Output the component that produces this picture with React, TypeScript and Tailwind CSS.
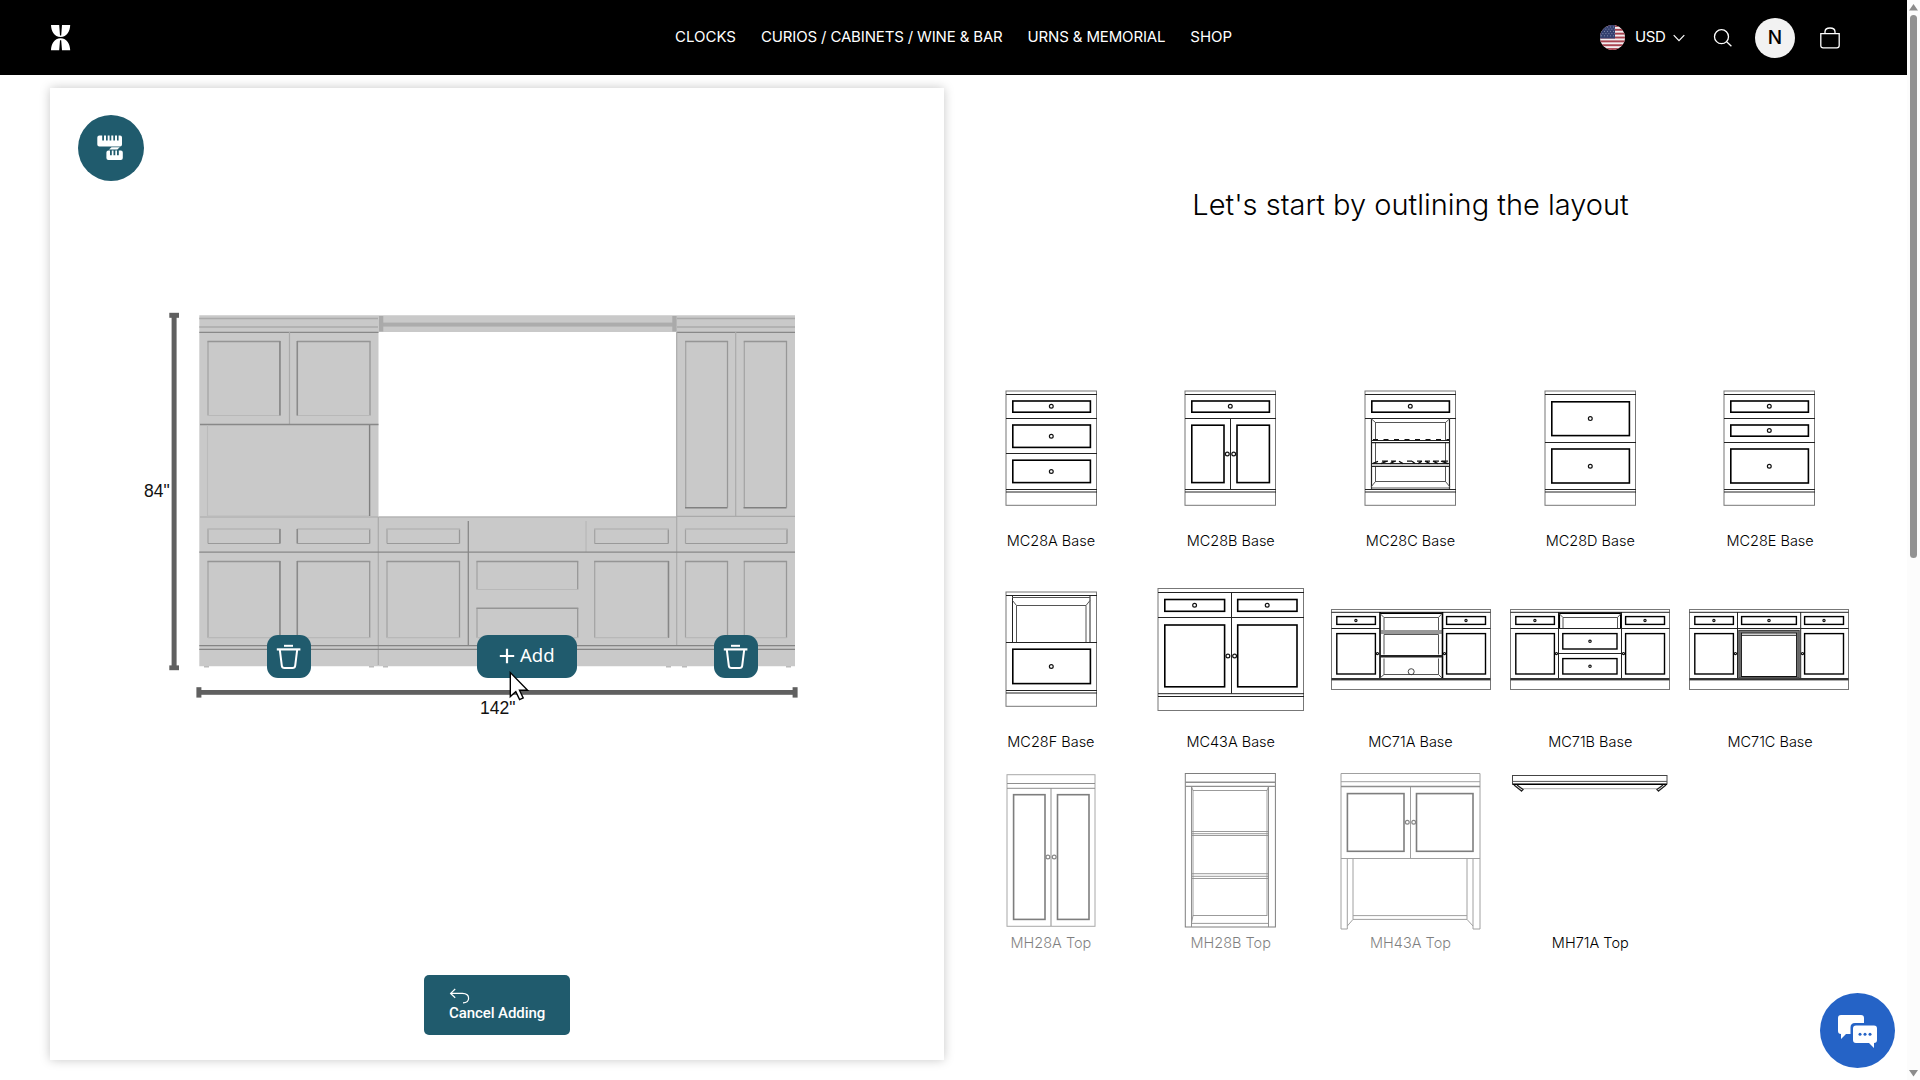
import type { ReactNode } from "react";

type BoxProps = { x1: number; y1: number; x2: number; y2: number; w?: number; c?: string; fill?: string };

/** Outlined rectangle given by its two corners. */
function Box({ x1, y1, x2, y2, w = 1, c = "#000", fill = "none" }: BoxProps) {
  return <rect x={x1} y={y1} width={x2 - x1} height={y2 - y1} fill={fill} stroke={c} strokeWidth={w} />;
}

function Lines({ d, w = 1, c = "#222" }: { d: string; w?: number; c?: string }) {
  return <path d={d} fill="none" stroke={c} strokeWidth={w} />;
}

function Knob({ x, y, r = 1.9, w = 1.2 }: { x: number; y: number; r?: number; w?: number }) {
  return <circle cx={x} cy={y} r={r} fill="#fff" stroke="#111" strokeWidth={w} />;
}

/* ---------- cabinet line drawings, 180 x 160 each ---------- */

function Frame28({ children }: { children: ReactNode }) {
  return (
    <>
      <Box x1={45} y1={22} x2={135.5} y2={136.3} c="#777" />
      <Lines d="M45 25.5H136M45 120.5H136M45 123H136" w={1.1} />
      {children}
    </>
  );
}

function TopDrawer28() {
  return (
    <>
      <Lines d="M45 49.5H136" />
      <Box x1={51.8} y1={32} x2={129.4} y2={43.2} w={1.6} />
      <Knob x={90.3} y={37.3} />
    </>
  );
}

function MC28A() {
  return (
    <Frame28>
      <TopDrawer28 />
      <Lines d="M45 84.5H136" />
      <Box x1={51.8} y1={56} x2={129.4} y2={78.4} w={1.6} />
      <Box x1={51.8} y1={91.2} x2={129.4} y2={113.6} w={1.6} />
      <Knob x={90.3} y={67.2} />
      <Knob x={90.3} y={102.5} />
    </Frame28>
  );
}

function MC28B() {
  return (
    <Frame28>
      <TopDrawer28 />
      <Lines d="M90.5 49V120" />
      <Box x1={51.8} y1={56.2} x2={84} y2={113.6} w={1.6} />
      <Box x1={97} y1={56.2} x2={129.4} y2={113.6} w={1.6} />
      <Knob x={87.3} y={85} />
      <Knob x={93.7} y={85} />
    </Frame28>
  );
}

function MC28C() {
  return (
    <Frame28>
      <TopDrawer28 />
      <Lines d="M51.5 49.5V120M129.5 49.5V120" w={1.2} />
      <Box x1={55.5} y1={53.5} x2={125.5} y2={112.5} c="#555" />
      <Lines d="M51 49.5L55.5 53.5M130 49.5L125.5 53.5M51 118L55.5 112.5M130 118L125.5 112.5M51 119H130" c="#555" />
      <rect x={52} y={71.5} width={77} height={2} fill="#fff" />
      <rect x={52} y={94.5} width={77} height={3} fill="#fff" />
      <Lines d="M52 71.5H129M52 73.7H129M52 97.3H129M52 94.7H129" w={1.2} />
      <path d="M53 70.6H129" stroke="#111" strokeWidth={1.2} strokeDasharray="5 5.5" />
      <path d="M53 94.4L58 92.4M61 94.6L67 92.2M70 94.6L75 92.2M79 92.2L83 94.6M87 92.2H92M92 92.2L95 94.6M98 94.6L102 92.2M105 92.2L110 94.6M113 92.2L118 94.6M121 92.2L128 94.6M62 92.2H68M71 92.2H76M97 92.2H102M105 92.2H110M113 92.2H119M122 92.2H128" stroke="#111" strokeWidth={1.3} />
    </Frame28>
  );
}

function MC28D() {
  return (
    <Frame28>
      <Lines d="M45 73.5H136" />
      <Box x1={51.8} y1={32.8} x2={129.4} y2={66.6} w={1.6} />
      <Box x1={51.8} y1={80} x2={129.4} y2={114} w={1.6} />
      <Knob x={90.3} y={49.6} />
      <Knob x={90.3} y={97.2} />
    </Frame28>
  );
}

function MC28E() {
  return (
    <Frame28>
      <TopDrawer28 />
      <Lines d="M45 73.5H136" />
      <Box x1={51.8} y1={56} x2={129.4} y2={67.2} w={1.6} />
      <Box x1={51.8} y1={80} x2={129.4} y2={114} w={1.6} />
      <Knob x={90.3} y={61.5} />
      <Knob x={90.3} y={97.2} />
    </Frame28>
  );
}

function MC28F() {
  return (
    <Frame28>
      <Lines d="M45 72.5H136M51.5 25.5V72M129 25.5V72" />
      <Lines d="M51 27.5H129M55.5 72V35.5H125V72M51.5 30.5L55.5 35.5M129 30.5L125 35.5" c="#555" />
      <Box x1={51.8} y1={79.2} x2={129.4} y2={113.6} w={1.6} />
      <Knob x={90.3} y={96.5} />
    </Frame28>
  );
}

function MC43A() {
  return (
    <>
      <Box x1={17} y1={18.5} x2={162.5} y2={140.5} c="#777" />
      <Lines d="M17 22.5H163M17 47.5H163M17 123.7H163M17 126.5H163M90.5 22V123.5" />
      <Box x1={23.8} y1={29.5} x2={83.6} y2={41.3} w={1.6} />
      <Box x1={96.7} y1={29.5} x2={156} y2={41.3} w={1.6} />
      <Box x1={23.8} y1={55} x2={83.6} y2={116.8} w={1.6} />
      <Box x1={96.7} y1={55} x2={156} y2={116.8} w={1.6} />
      <Knob x={53.6} y={35.2} />
      <Knob x={126.2} y={35.2} />
      <Knob x={86.9} y={86} />
      <Knob x={93.6} y={86} />
    </>
  );
}

function Frame71({ children }: { children: ReactNode }) {
  return (
    <>
      <Box x1={10.5} y1={39.5} x2={169.5} y2={119.5} c="#777" />
      <Lines d="M10.5 42.3H169.5" />
      <rect x={10.5} y={108} width={159} height={2.4} fill="#333" />
      <Lines d="M10.5 58.5H58.5M121.5 58.5H169.5" />
      <Box x1={15.8} y1={46.6} x2={54.4} y2={54.4} w={1.4} />
      <Box x1={125.6} y1={46.6} x2={164.5} y2={54.4} w={1.4} />
      <Box x1={15.8} y1={63.6} x2={54.4} y2={104} w={1.4} />
      <Box x1={125.6} y1={63.6} x2={164.5} y2={104} w={1.4} />
      <Knob x={34.9} y={50.5} r={1.1} />
      <Knob x={145} y={50.5} r={1.1} />
      {children}
      <Knob x={56.4} y={83.6} r={1.1} />
      <Knob x={123.5} y={83.6} r={1.1} />
    </>
  );
}

function MC71A() {
  return (
    <Frame71>
      <Lines d="M59 42V108M121.5 42V108" w={1.6} c="#000" />
      <Lines d="M59 43.2H121.5" w={1.4} c="#000" />
      <Lines d="M63 60V47.5H117.5V60M63 84.5V64.5H117.5V84.5M63 88.5V104.5H117.5V88.5M59 43.5L63 47.5M121 43.5L117.5 47.5M59 108L63 104.5M121 108L117.5 104.5" c="#555" />
      <Lines d="M59 61H121.5M59 63H121.5" c="#333" />
      <Lines d="M59 86.3H121.5" w={2.6} />
      <circle cx={90.2} cy={101.7} r={3} fill="none" stroke="#333" strokeWidth={0.9} />
    </Frame71>
  );
}

function MC71B() {
  return (
    <Frame71>
      <Lines d="M58.5 42V108M121.5 42V108M58.5 58.5H121.5M58.5 83.5H121.5" />
      <Lines d="M59.3 58V43.2H120.8V58" w={1.6} c="#000" />
      <Lines d="M63 58V47.5H117.5V58M59 43.5L63 47.5M121 43.5L117.5 47.5" c="#555" />
      <Box x1={62.8} y1={63.6} x2={117} y2={79} w={1.4} />
      <Box x1={62.8} y1={88.6} x2={117} y2={104} w={1.4} />
      <Knob x={90} y={71.3} r={1.2} />
      <Knob x={90} y={96.3} r={1.2} />
    </Frame71>
  );
}

function MC71C() {
  return (
    <Frame71>
      <Lines d="M58.5 42V108M121.7 42V108M58.5 58.5H121.5" />
      <Box x1={62.6} y1={46.6} x2={117.4} y2={54.4} w={1.4} />
      <Knob x={90} y={50.5} r={1.2} />
      <Box x1={61} y1={61.5} x2={119} y2={107.3} w={2.6} c="#777" />
      <Box x1={62.4} y1={63} x2={117.6} y2={106.5} w={1} c="#111" />
      <Lines d="M62.6 65.3H117.4" />
      <Box x1={59.8} y1={60.3} x2={120.2} y2={108} w={0.8} c="#222" />
    </Frame71>
  );
}

function MH28A() {
  return (
    <>
      <Box x1={46} y1={3.7} x2={134} y2={155.3} c="#555" />
      <Lines d="M46 12.5H134M46 17.3H134M90 17V155" />
      <Box x1={52.6} y1={23.7} x2={84} y2={148.4} w={1.6} />
      <Box x1={96.5} y1={23.7} x2={128} y2={148.4} w={1.6} />
      <Knob x={86.9} y={86} />
      <Knob x={93.2} y={86} />
    </>
  );
}

function MH28B() {
  return (
    <>
      <Box x1={44.3} y1={2.5} x2={134.4} y2={156} />
      <Lines d="M44 11.3H134M44 15.4H134" w={1.4} />
      <Lines d="M50.5 15.4V156M127.5 15.4V156" w={1} />
      <Lines d="M52 19V145M126 19V145" w={1} c="#444" />
      <Lines d="M52 19.5H126M50.5 15.5L52 19.5M127.5 15.5L126 19.5M50.5 60.5H127.5M50.5 62.7H127.5M50.5 64.5H127.5M50.5 102.7H127.5M50.5 105.3H127.5M50.5 107.5H127.5M52 144.5H126M50.5 152.4H127.5M52 144.5L50.5 152" w={0.9} />
    </>
  );
}

function MH43A() {
  return (
    <>
      <Lines d="M19 2.5H158V158H151V87.5M19 2.5V158H25.3V87.5" c="#444" />
      <Lines d="M19 10.7H158M19 87.5H158M88.5 15.5V87.5" c="#444" />
      <Lines d="M19 15.5H158" w={1.3} />
      <Box x1={25.4} y1={22.6} x2={82} y2={80.3} w={1.6} />
      <Box x1={94.5} y1={22.6} x2={151} y2={80.3} w={1.6} />
      <Lines d="M31 87.5V148.5M145 87.5V148.5M31 144.6H145M31 148.4H145M31 148.4L25.3 155M145 148.4L151 155" c="#444" />
      <Knob x={85.3} y={51.3} />
      <Knob x={91.7} y={51.3} />
    </>
  );
}

function MH71A() {
  return (
    <>
      <Box x1={12.5} y1={4.5} x2={167} y2={13} c="#444" />
      <Lines d="M12.5 10.4H167" c="#555" />
      <Lines d="M12.5 13.3H167" w={1.3} c="#000" />
      <Lines d="M22 17.7H158" w={0.8} c="#999" />
      <Lines d="M14 14L21.5 20M17 14L23 18.5L21 20.5M166 14L158.5 20M163 14L157 18.5L159 20.5" w={1.3} />
    </>
  );
}

const pieces: { name: string; art: () => ReactNode; dim?: boolean; dx?: number }[] = [
  { name: "MC28A Base", art: MC28A },
  { name: "MC28B Base", art: MC28B, dx: -1 },
  { name: "MC28C Base", art: MC28C, dx: -1 },
  { name: "MC28D Base", art: MC28D },
  { name: "MC28E Base", art: MC28E, dx: -1 },
  { name: "MC28F Base", art: MC28F },
  { name: "MC43A Base", art: MC43A },
  { name: "MC71A Base", art: MC71A },
  { name: "MC71B Base", art: MC71B },
  { name: "MC71C Base", art: MC71C, dx: -1 },
  { name: "MH28A Top", art: MH28A, dim: true },
  { name: "MH28B Top", art: MH28B, dim: true },
  { name: "MH43A Top", art: MH43A, dim: true, dx: 1 },
  { name: "MH71A Top", art: MH71A },
];

/* ---------- header ---------- */

function Logo() {
  return (
    <svg width="20" height="26" viewBox="0 0 20 26" fill="#fff">
      <path d="M0 0H8.2L9 10.4H10.2L11 0H19.2C19 6 16 12 9.6 12C3.2 12 .2 6 0 0Z" />
      <path d="M0 25.2H8.2L9 15.2H10.2L11 25.2H19.2C19 19.2 16 13.2 9.6 13.2C3.2 13.2 .2 19.2 0 25.2Z" />
    </svg>
  );
}

function Flag() {
  return (
    <svg width="25" height="25" viewBox="0 0 25 25">
      <clipPath id="flag-round">
        <circle cx="12.5" cy="12.5" r="12.5" />
      </clipPath>
      <g clipPath="url(#flag-round)">
        <rect width="25" height="25" fill="#f3eef0" />
        {[0, 1, 2, 3, 4, 5, 6].map((i) => (
          <rect key={i} y={i * 3.85} width="25" height="1.92" fill="#a8434f" />
        ))}
        <rect width="15" height="13.5" fill="#34406f" />
        <path
          d="M1 2H15M2.5 4.2H15M1 6.4H15M2.5 8.6H15M1 10.8H15"
          stroke="#a9b0cc"
          strokeWidth="0.8"
          strokeDasharray="0.8 2.2"
        />
      </g>
    </svg>
  );
}

function Header() {
  return (
    <header className="flex h-[75px] items-center bg-black pl-[51px] pr-[66px] text-[15px] text-white">
      <div className="w-[624px]">
        <Logo />
      </div>
      <nav className="flex flex-1 gap-[25px] whitespace-nowrap">
        <a>CLOCKS</a>
        <a className="tracking-[-0.15px]">CURIOS / CABINETS / WINE &amp; BAR</a>
        <a className="tracking-[-0.15px]">URNS &amp; MEMORIAL</a>
        <a>SHOP</a>
      </nav>
      <div className="flex items-center">
        <Flag />
        <span className="ml-[10px] w-[31px] tracking-[-0.4px]">USD</span>
        <svg className="ml-[7px]" width="12" height="8" viewBox="0 0 12 8" fill="none" stroke="#fff" strokeWidth="1.2">
          <path d="M.7 1.2L6 6.6L11.3 1.2" />
        </svg>
        <svg className="ml-[28px]" width="20" height="20" viewBox="0 0 20 20" fill="none" stroke="#fff" strokeWidth="1.3">
          <circle cx="8.5" cy="8.7" r="7" />
          <path d="M13.4 13.6L18.4 18.2" />
        </svg>
        <div className="ml-[22px] mt-[1px] flex size-10 items-center justify-center rounded-full bg-[#f2f2f2] pt-[1px] text-[19px] font-medium text-black">
          N
        </div>
        <svg className="ml-[25px] mt-[1px]" width="21" height="22" viewBox="0 0 21 22" fill="none" stroke="#fff" strokeWidth="1.3">
          <path d="M.8 6.6H19.2V18.4Q19.2 20.8 16.8 20.8H3.2Q.8 20.8 .8 18.4ZM5 6.4V4.6Q5.2 1 10 1Q14.8 1 15 4.6V6.4" />
        </svg>
      </div>
    </header>
  );
}

/* ---------- planner ---------- */

const inset = (x1: number, y1: number, x2: number, y2: number) => ({ x1, y1, x2, y2 });

const wallPanels = [
  inset(208, 341.5, 279.8, 415.5),
  inset(297.5, 341.5, 370, 415.5),
  inset(685.7, 341.5, 727.5, 507.5),
  inset(744.3, 341.5, 786.5, 507.5),
  inset(208, 529, 279.8, 543.5),
  inset(297.5, 529, 369.7, 543.5),
  inset(387, 529, 459.5, 543.5),
  inset(594.7, 529, 668.3, 543.5),
  inset(685.5, 529, 787, 543.5),
  inset(208, 561.5, 279.8, 637.7),
  inset(297.5, 561.5, 369.7, 637.7),
  inset(387, 561.5, 459.5, 637.7),
  inset(477, 561.5, 577.7, 589.5),
  inset(477, 608.3, 577.7, 637.7),
  inset(594.7, 561.5, 668.3, 637.7),
  inset(685.5, 561.5, 727.5, 637.7),
  inset(744.3, 561.5, 786.5, 637.7),
];

function Wall() {
  return (
    <svg width="894" height="660" viewBox="50 180 894 660">
      <path d="M199.3 315.3H795V666.3H199.3Z" fill="#c9c9c9" />
      <path d="M378.5 332H676.5V516.5H378.5Z" fill="#fff" />
      {/* cornices */}
      <path d="M199.3 318.5H378M199.3 327H378M677 318.5H795M677 327H795" stroke="#aaa" strokeWidth="1.3" />
      <path d="M199.3 332.4H378.5M677 332.4H795" stroke="#888" strokeWidth="1.4" />
      <rect x="383" y="322.6" width="290" height="4" fill="#acacac" />
      <path d="M379 316H383.3V331.5H379ZM672.3 316H676.6V331.5H672.3Z" fill="#aaa" />
      {/* carcass joints */}
      <path
        d="M289.5 332V424M735.7 332V516M200 517H378M378.5 517H677M677 516.3H795M676.7 332V645M378.3 517V665"
        fill="none"
        stroke="#aaa"
        strokeWidth="1.2"
      />
      <path d="M586 521V552" stroke="#b6b6b6" strokeWidth="1.1" />
      <path d="M200 424.5H378.5M199.3 552.2H795M468.3 521V645" fill="none" stroke="#888" strokeWidth="1.3" />
      <path d="M199.3 645.6H795M199.3 649.4H795" stroke="#858585" strokeWidth="1.3" />
      <path d="M207.5 425V516H369" fill="none" stroke="#bbb" strokeWidth="1.1" />
      <path d="M369.6 425V516" stroke="#808080" strokeWidth="1.4" />
      {wallPanels.map((p, i) => (
        <g key={i} fill="none">
          <path d={`M${p.x1} ${p.y2}V${p.y1}`} stroke="#a2a2a2" strokeWidth="1.2" />
          <path d={`M${p.x2} ${p.y1}V${p.y2}`} stroke="#979797" strokeWidth="1.3" />
          <path d={`M${p.x1 - 0.6} ${p.y1}H${p.x2 + 0.6}`} stroke={p.y1 === 529 ? "#b4b4b4" : "#959595"} strokeWidth="1.4" />
          <path d={`M${p.x1} ${p.y2}H${p.x2}`} stroke={p.y1 === 529 ? "#999" : "#b8b8b8"} strokeWidth="1.2" />
        </g>
      ))}
      <path d="M280 341V415.5M280 529V543.5M280 561V637.7M297.2 341V415.5M297.2 529V543.5M297.2 561V637.7M668.6 561V637.7" stroke="#868686" strokeWidth="1.3" />
      <path d="M685 507.7H727.5M743.5 507.7H786.5" stroke="#808080" strokeWidth="1.6" />
      {/* feet */}
      <path d="M204 666.8H209M369 666.8H374M383 666.8H388M666 666.8H671M682 666.8H687M786 666.8H791" stroke="#bbb" strokeWidth="1.4" />
      {/* rulers */}
      <g fill="#606060">
        <rect x="171.6" y="313" width="5" height="357" />
        <rect x="169.3" y="312.8" width="9.7" height="5" />
        <rect x="169.3" y="665.4" width="9.7" height="4.8" />
        <rect x="197" y="690" width="600" height="4.8" />
        <rect x="196.4" y="687.2" width="5" height="10.4" />
        <rect x="792.6" y="687.2" width="5" height="10.4" />
      </g>
    </svg>
  );
}

function TrashButton({ className }: { className: string }) {
  return (
    <button className={`flex h-[43px] w-11 items-center justify-center rounded-[11px] bg-[#205b6d] ${className}`}>
      <svg width="26" height="26" viewBox="0 0 26 26" fill="none" stroke="#fff">
        <path d="M8 1.8H17" strokeWidth="2" />
        <path d="M.8 5.4H24.4" strokeWidth="2.2" />
        <path d="M3.8 5.6L5.8 21.6Q6.1 24 8.5 24H16.5Q18.9 24 19.2 21.6L21.2 5.6" strokeWidth="2" />
      </svg>
    </button>
  );
}

function RulerIcon() {
  return (
    <svg width="28" height="26" viewBox="0 0 28 26" fill="#fff">
      <path d="M2.4 .5H5.2V5.5H7V.5H9V5.5H10.7V.5H12.6V5.5H14.3V.5H16.3V5.5H18V.5H20V5.5H21.6V.5H23Q25 .5 25 2.6V9.4Q25 11.4 23 11.4H2.4Q.3 11.4 .3 9.4V2.6Q.3 .5 2.4 .5Z" />
      <path d="M14.5 12.2H22.8L20.3 14.4H12Z" />
      <path d="M11.4 15.4H13V20.2H14.8V15.4H16.5V20.2H18.3V15.4H20V20.2H21.8V15.4H23.9Q25.8 15.4 25.8 17.4V23Q25.8 25 23.8 25H11.4Q9.4 25 9.4 23V17.4Q9.4 15.4 11.4 15.4Z" />
    </svg>
  );
}

function Planner() {
  return (
    <section className="relative flex h-[972px] w-[894px] flex-col bg-white shadow-[0_0_10px_rgba(0,0,0,0.22)]">
      <button className="absolute left-[28px] top-[27px] flex size-[66px] items-center justify-center rounded-full bg-[#205b6d]">
        <RulerIcon />
      </button>
      <div className="relative mt-[92px] h-[660px]">
        <Wall />
        <span className="absolute left-[94px] top-[299px] font-['Liberation_Sans',sans-serif] text-[17.5px] leading-[24px] text-[#111]">84"</span>
        <span className="absolute left-[430px] top-[516px] font-['Liberation_Sans',sans-serif] text-[17.5px] leading-[24px] text-[#111]">142"</span>
        <TrashButton className="absolute left-[217px] top-[455px]" />
        <TrashButton className="absolute left-[664px] top-[455px]" />
        <button className="absolute left-[427px] top-[455px] flex h-[43px] w-[100px] items-center rounded-[11px] bg-[#205b6d] pl-[22px] font-['Noto_Sans',sans-serif] text-[18.5px] text-white">
          <svg className="-mt-[2px]" width="16" height="16" viewBox="0 0 16 16" stroke="#fff" strokeWidth="2.2">
            <path d="M8 .8V15.2M.8 8H15.2" />
          </svg>
          <span className="ml-[5px] pb-[4px]">Add</span>
        </button>
        <svg className="absolute left-[459px] top-[491px]" width="22" height="30" viewBox="0 0 22 30">
          <path d="M1.3 1.6V25.6L6.8 20.6L10.6 28.6L14.2 26.9L10.5 19.2H18.6Z" fill="#fff" stroke="#000" strokeWidth="1.4" />
        </svg>
      </div>
      <button className="mx-auto mt-[135px] flex h-[60px] w-[146px] flex-col items-start rounded-[5px] bg-[#205b6d] pl-[25px] pt-[13px] font-['Roboto',sans-serif] text-[15px] leading-[18px] text-white">
        <svg width="21" height="16" viewBox="0 0 21 16" fill="none" stroke="#fff" strokeWidth="1.2">
          <path d="M6.2 1L1.6 5.4L6.2 9.8M1.6 5.4H13.5Q19.6 5.6 19.6 10.2Q19.6 14.6 14 14.8" />
        </svg>
        <span className="font-medium tracking-[-0.08px]">Cancel Adding</span>
      </button>
    </section>
  );
}

/* ---------- layout picker ---------- */

function Picker() {
  return (
    <section className="w-[899px]">
      <h1 className="pt-[96px] text-center text-[29px] font-light leading-[42px] text-black">
        Let's start by outlining the layout
      </h1>
      <div className="mt-[143px] grid grid-cols-5">
        {pieces.map(({ name, art: Art, dim, dx = 0 }) => (
          <div key={name} className={dim ? "h-[201px] opacity-50" : "h-[201px]"}>
            <svg className="h-[160px] w-full overflow-visible">
              <g transform={`translate(${dx} 0)`}>
                <Art />
              </g>
            </svg>
            <div className="pt-[1px] text-center text-[14.5px] font-light leading-[22px] text-black">{name}</div>
          </div>
        ))}
      </div>
    </section>
  );
}

function ChatButton() {
  return (
    <button className="fixed bottom-[12px] right-[25px] flex size-[75px] items-center justify-center rounded-full bg-[#2563c6] pt-[3px]">
      <svg width="40" height="36" viewBox="0 0 40 36" fill="#fff">
        <path d="M3 1H23Q26 1 26 4V9H17Q12.5 9 12.5 13.5V20H8L3 25V20Q0 20 0 17V4Q0 1 3 1Z" />
        <path d="M18 11.5H36Q39 11.5 39 14.5V26Q39 29 36 29V34L31 29H18Q15 29 15 26V14.5Q15 11.5 18 11.5Z" />
        <g fill="#2563c6">
          <circle cx="22" cy="20.3" r="1.5" />
          <circle cx="27" cy="20.3" r="1.5" />
          <circle cx="32" cy="20.3" r="1.5" />
        </g>
      </svg>
    </button>
  );
}

function Scrollbar() {
  return (
    <div className="flex h-full w-[13px] flex-col items-center bg-[#fcfcfc] pb-[3px] pt-[4px]">
      <svg width="9" height="7" viewBox="0 0 9 7" fill="#8b8b8b">
        <path d="M4.5 0L9 6.5H0Z" />
      </svg>
      <div className="mt-[4px] h-[543px] w-[7px] rounded-full bg-[#929292]" />
      <svg className="mt-auto" width="9" height="7" viewBox="0 0 9 7" fill="#8b8b8b">
        <path d="M4.5 6.5L9 0H0Z" />
      </svg>
    </div>
  );
}

export default function App() {
  return (
    <div className="flex h-[1080px] w-[1920px] overflow-hidden bg-white font-['Inter',sans-serif]">
      <div className="flex flex-1 flex-col">
        <Header />
        <main className="flex pl-[50px] pt-[13px]">
          <Planner />
          <div className="ml-[17px]">
            <Picker />
          </div>
        </main>
      </div>
      <Scrollbar />
      <ChatButton />
    </div>
  );
}
